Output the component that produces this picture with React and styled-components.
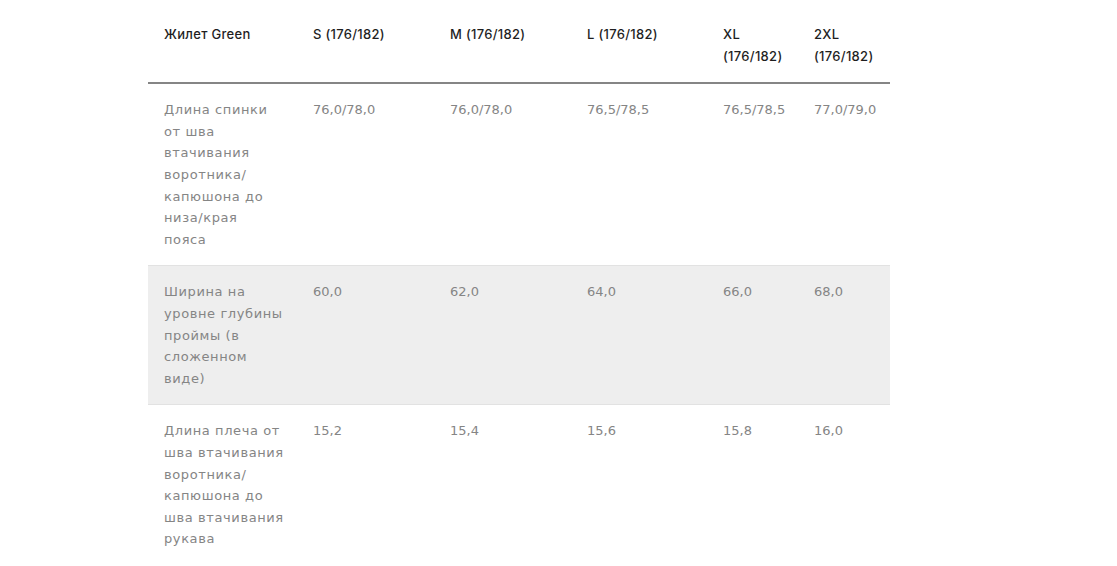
import React from "react"
import styled, { createGlobalStyle } from "styled-components"

const GlobalStyle = createGlobalStyle`
  html, body {
    margin: 0;
    padding: 0;
    background: #fff;
  }
  body {
    font-family: "DejaVu Sans", "Open Sans", sans-serif;
  }
`

const Page = styled.div`
  padding: 9px 0 0 148px;
`

const Table = styled.table`
  width: 742px;
  border-collapse: collapse;
  table-layout: fixed;
  font-size: 13px;
  line-height: 21.6px;
`

const HeadCell = styled.th`
  box-sizing: border-box;
  width: ${({ w }) => w}px;
  padding: 15px ${({ first }) => (first ? 10 : 16)}px 15px 16px;
  text-align: left;
  vertical-align: top;
  font-family: Inter, "Open Sans", sans-serif;
  font-size: 13px;
  font-weight: 500;
  letter-spacing: 0.3px;
  color: #1f1f1f;
  border-bottom: 2px solid #858585;
`

const Row = styled.tr`
  background: ${({ shaded }) => (shaded ? "#eeeeee" : "transparent")};
  border-bottom: 1px solid ${({ last }) => (last ? "transparent" : "#e2e2e2")};
`

const Cell = styled.td`
  box-sizing: border-box;
  padding: 15px ${({ label }) => (label ? 10 : 16)}px 15px 16px;
  vertical-align: top;
  color: #858585;
  font-weight: 400;
  letter-spacing: ${({ label }) => (label ? 0.6 : 0)}px;
`

const Line = styled.span`
  display: block;
  white-space: nowrap;
`

const columns = [
  { title: "Жилет Green", w: 149 },
  { title: "S (176/182)", w: 137 },
  { title: "M (176/182)", w: 137 },
  { title: "L (176/182)", w: 136 },
  { title: "XL (176/182)", w: 91 },
  { title: "2XL (176/182)", w: 92 },
]

const rows = [
  {
    name: ["Длина спинки", "от шва", "втачивания", "воротника/", "капюшона до", "низа/края", "пояса"],
    values: ["76,0/78,0", "76,0/78,0", "76,5/78,5", "76,5/78,5", "77,0/79,0"],
  },
  {
    name: ["Ширина на", "уровне глубины", "проймы (в", "сложенном", "виде)"],
    values: ["60,0", "62,0", "64,0", "66,0", "68,0"],
  },
  {
    name: ["Длина плеча от", "шва втачивания", "воротника/", "капюшона до", "шва втачивания", "рукава"],
    values: ["15,2", "15,4", "15,6", "15,8", "16,0"],
  },
]

export default function App() {
  return (
    <>
      <GlobalStyle />
      <Page>
        <Table>
          <thead>
            <tr>
              {columns.map((c, i) => (
                <HeadCell key={c.title} w={c.w} first={i === 0}>
                  {c.title}
                </HeadCell>
              ))}
            </tr>
          </thead>
          <tbody>
            {rows.map((r, i) => (
              <Row key={i} shaded={i === 1} last={i === rows.length - 1}>
                <Cell label>
                  {r.name.map((line) => (
                    <Line key={line}>{line}</Line>
                  ))}
                </Cell>
                {r.values.map((v, j) => (
                  <Cell key={j}>{v}</Cell>
                ))}
              </Row>
            ))}
          </tbody>
        </Table>
      </Page>
    </>
  )
}
